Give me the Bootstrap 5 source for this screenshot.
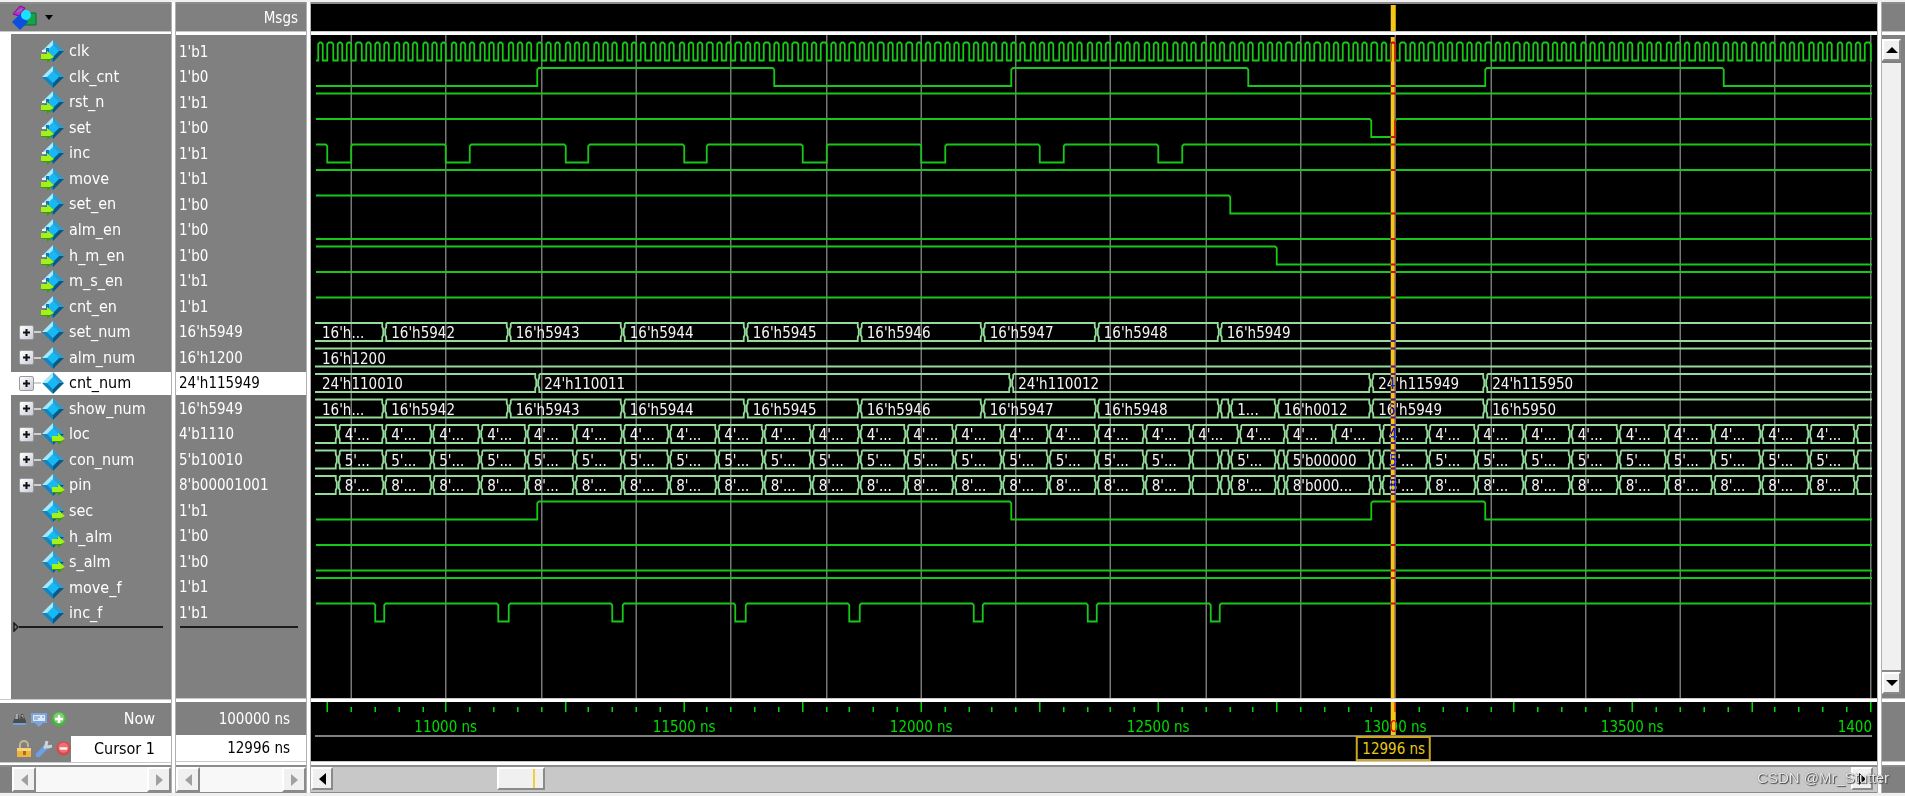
<!DOCTYPE html>
<html lang="en">
<head>
<meta charset="utf-8">
<meta name="viewport" content="width=device-width, initial-scale=1">
<title>Wave</title>
<link rel="stylesheet" href="https://cdn.jsdelivr.net/npm/bootstrap@5.3.0/dist/css/bootstrap.min.css">
<style>
  body { font-family: "DejaVu Sans Condensed", "DejaVu Sans", sans-serif; font-size: 15px; line-height: 20px; background: #f0f0f0; color: #fff; }
  .wave-window { height: 100vh; min-height: 560px; padding: 2px 0 3px; }
  .names-col { width: 171px; font-size: 16px; }
  .values-col { width: 130px; }
  .vbar-col { width: 23px; }
  .v-sash { width: 5px; background: #fff; border: solid #b0b0b0; border-width: 0 1px; }
  .h-sash { height: 4px; background: #fff; border: solid #c8c8c8; border-width: 1px 0 0; }
  .pane-grey { background: #808080; }
  .pane-black { background: #000; }
  .head-cell { height: 29px; border-top: 2px solid #8c8c8c; }
  .foot-cell { height: 59px; }
  .bar-cell { height: 28px; border-top: 2px solid #8c8c8c; border-bottom: 1px solid #8c8c8c; }
  .body-cell { min-height: 0; overflow: hidden; }
  .gutter { width: 11px; background: #fff; }
  .signal-rows { display: grid; grid-template-rows: repeat(23, 51fr) 145fr; padding-top: 4px; }
  .signal-rows > li { min-height: 0; white-space: nowrap; }
  .name-row { padding-left: 8px; line-height: 18px; }
  .value-row { padding-left: 3px; line-height: 18px; }
  .picked { background: #fff; color: #000; margin: 1px 0; }
  .expander { width: 15px; height: 15px; padding: 0; border: 1px solid #9a9a9a; border-radius: 2px; background: linear-gradient(135deg, #fff, #c9cdd8); }
  .expander svg, .menu-btn svg, .tool-btn svg, .arrow-btn svg { display: block; }
  .no-expander { width: 22px; }
  .twig { width: 7px; height: 2px; background: #d0d0d0; }
  .insert-mark { height: 10px; margin-top: -4px; }
  .insert-line { height: 2px; background: #1c1c1c; }
  .menu-btn, .tool-btn { padding: 0; border: 0; background: transparent; }
  .cursor-row { height: 26px; }
  .now-row { height: 33px; }
  .cursor-tools { width: 71px; padding-left: 16px; }
  .white-cell { background: #fff; color: #000; }
  .arrow-btn { padding: 0; background: #f0f0f0; border: 2px solid; border-color: #fff #8a8a8a #8a8a8a #fff; display: flex; align-items: center; justify-content: center; }
  .side-arrow { width: 24px; color: #a0a0a0; }
  .wave-arrow { width: 22px; color: #000; }
  .up-arrow { height: 22px; color: #000; }
  .trough { background: #f8f8f8; }
  .wave-trough { background: #c8c8c8; padding: 0 4px 2px 0; }
  .wave-thumb { width: 48px; background: #f0f0f0; border: 2px solid; border-color: #fff #8a8a8a #8a8a8a #fff; }
  .thumb-mark { width: 2px; background: #f0cf3a; margin-right: 8px; }
  .v-track { background: #f0f0f0; border-bottom: 2px solid #8a8a8a; margin-top: 2px; }
  .watermark { position: absolute; right: 16px; bottom: 8px; font: 15px/20px "Liberation Sans", sans-serif; color: #e8e8e8; text-shadow: 1px 1px 1px #444, 0 0 1px #666; pointer-events: none; }
  .plot { display: block; width: 100%; height: 100%; }
  .plot path { fill: none; }
  .scalar { stroke: #18c818; stroke-width: 1.8; }
  .bus { stroke: #93dc99; stroke-width: 1.8; }
  .grid-line { stroke: #777; stroke-width: 1.5; }
  .tick { stroke: #00dc00; stroke-width: 1.5; }
  .base-line { stroke: #808080; stroke-width: 2; }
  .bus-text { fill: #f4f4f4; }
  .time-text { fill: #00dc00; text-anchor: middle; }
  .time-text.clipped { text-anchor: end; }
  .cursor-line { fill: #f5c913; mix-blend-mode: difference; }
  .cursor-box { fill: #000; stroke: #c9a820; stroke-width: 2; }
  .cursor-text { fill: #e8c81c; text-anchor: middle; }
</style>
</head>
<body>
<svg width="0" height="0" class="position-absolute" aria-hidden="true">
  <defs>
    <symbol id="gem" viewBox="0 0 24 24">
      <path d="M12 1 1 12h5.500L12 6.500z" fill="#a5e9fb"/>
      <path d="M12 1 23 12h-5.500L12 6.500z" fill="#2c9dd2"/>
      <path d="M23 12 12 23v-5.500L17.500 12z" fill="#075a86"/>
      <path d="M1 12 12 23v-5.500L6.500 12z" fill="#0f86c0"/>
      <path d="M12 6 18 12 12 18 6 12z" fill="#16b9f4"/>
    </symbol>
    <symbol id="arrow" viewBox="0 0 13 12">
      <path d="M0 3h6V0l7 6-7 6V9H0z" fill="#3f9a0a"/>
      <path d="M0 3h6V0l7 6-4 2H0z" fill="#a4f01a"/>
    </symbol>
    <symbol id="sig-node" viewBox="0 0 24 24"><use href="#gem" width="24" height="24"/></symbol>
    <symbol id="sig-in" viewBox="0 0 24 24">
      <use href="#gem" width="24" height="24"/>
      <path d="M0 11h6v3H0z" fill="#808080"/>
      <path d="M1 11h5v2H1z" fill="#e8f6ff"/><path d="M5 9h3v4H5z" fill="#1477b4"/>
      <use href="#arrow" x="0" y="12" width="13" height="12"/>
    </symbol>
    <symbol id="sig-out" viewBox="0 0 24 24">
      <use href="#gem" width="24" height="24"/>
      <use href="#arrow" x="11" y="11" width="13" height="12"/>
    </symbol>
  </defs>
</svg>

<main class="wave-window d-flex position-relative overflow-hidden">
  <section class="names-col d-flex flex-column flex-shrink-0" aria-label="Signal names">
    <div class="head-cell pane-grey d-flex align-items-center ps-2">
      <button type="button" class="menu-btn d-flex align-items-center gap-2 ps-1" aria-label="Objects menu">
        <svg width="25" height="25" viewBox="0 0 25 25">
          <path d="M1 9 8 1l5 2-6 8z" fill="#c026d3" stroke="#7a0d92"/>
          <path d="M5 7l5-3" stroke="#808080" stroke-width="2"/>
          <path d="M13 8h11v12H12z" fill="#16a34a" stroke="#0b6b34"/>
          <path d="M8 9l8 8-8 8-8-8z" fill="#0b4fe0"/>
          <circle cx="14" cy="10" r="5" fill="#1fe0fb"/>
        </svg>
        <svg width="8" height="5" viewBox="0 0 8 5"><path d="M0 0h8L4 5z" fill="#000"/></svg>
      </button>
    </div>
    <div class="h-sash"></div>
    <div class="body-cell flex-fill d-flex">
      <div class="gutter"></div>
      <ul id="names" class="signal-rows pane-grey list-unstyled mb-0 flex-fill"></ul>
    </div>
    <div class="h-sash"></div>
    <div class="foot-cell pane-grey">
      <div class="now-row d-flex align-items-center justify-content-between ps-2">
        <div class="d-flex gap-1 ps-1">
          <button type="button" class="tool-btn" aria-label="Find"><svg width="15" height="16" viewBox="0 0 15 16"><path d="M1 11 4 3h2l2 6 1-6h2l3 7v2H1z" fill="#4c4c4c"/><path d="M4 3h2v5H3zM9 4h2l1 4z" fill="#a9a9a9"/><path d="M1 13h13" stroke="#6fa0d8" stroke-width="2"/></svg></button>
          <button type="button" class="tool-btn" aria-label="Edit grid"><svg width="16" height="16" viewBox="0 0 16 16"><path d="M0 2h16v10h-4l-4 4-4-4H0z" fill="#7aa5dc"/><path d="M2 4h12v6H2z" fill="#dce9f8"/><path d="M3 6h6M3 8h4M11 6h2" stroke="#6d8eb8"/></svg></button>
          <button type="button" class="tool-btn" aria-label="Add cursor"><svg width="16" height="16" viewBox="0 0 16 16"><circle cx="8" cy="8" r="7.500" fill="#4fae48"/><circle cx="8" cy="7" r="5.500" fill="#7ccf70"/><path d="M8 4v8M4 8h8" stroke="#fff" stroke-width="2.500"/></svg></button>
        </div>
        <span class="pe-3">Now</span>
      </div>
      <div class="cursor-row d-flex">
        <div class="cursor-tools d-flex align-items-center gap-1">
          <button type="button" class="tool-btn" aria-label="Lock cursor"><svg width="16" height="18" viewBox="0 0 16 18"><path d="M4 9V5a4 4 0 0 1 8 0v2" stroke="#c3b891" stroke-width="2" fill="none"/><path d="M1 8h14v9H1z" fill="#f0b43c"/><path d="M1 8h14v3H1z" fill="#f9d27a"/><path d="M7 11h3v4H7z" fill="#a86f12"/></svg></button>
          <button type="button" class="tool-btn" aria-label="Cursor properties"><svg width="16" height="17" viewBox="0 0 16 17"><path d="M2 15 9 8" stroke="#6f9fe6" stroke-width="5" stroke-linecap="round"/><path d="M8 8 12 5M11 1 10 5l2 2 4-1" stroke="#c9d3df" stroke-width="3" fill="none"/></svg></button>
          <button type="button" class="tool-btn" aria-label="Delete cursor"><svg width="15" height="15" viewBox="0 0 16 16"><circle cx="8" cy="8" r="7.500" fill="#d94848"/><circle cx="8" cy="7" r="5.500" fill="#f07070"/><path d="M4 8h8" stroke="#fff" stroke-width="2.500"/></svg></button>
        </div>
        <div class="white-cell flex-fill d-flex align-items-center justify-content-end pe-3">Cursor 1</div>
      </div>
    </div>
    <div class="h-sash"></div>
    <div class="bar-cell pane-grey d-flex">
      <div class="pane-grey ps-2 pe-1"></div>
      <button type="button" class="arrow-btn side-arrow" aria-label="Scroll names left"><svg width="7" height="12" viewBox="0 0 7 12"><path d="M7 0v12L0 6z" fill="currentColor"/></svg></button>
      <div class="trough flex-fill"></div>
      <button type="button" class="arrow-btn side-arrow" aria-label="Scroll names right"><svg width="7" height="12" viewBox="0 0 7 12"><path d="M0 0v12l7-6z" fill="currentColor"/></svg></button>
    </div>
  </section>
  <div class="v-sash flex-shrink-0"></div>

  <section class="values-col d-flex flex-column flex-shrink-0" aria-label="Signal values">
    <div class="head-cell pane-grey d-flex align-items-center justify-content-end pe-2">Msgs</div>
    <div class="h-sash"></div>
    <div class="body-cell flex-fill d-flex">
      <ul id="values" class="signal-rows pane-grey list-unstyled mb-0 flex-fill"></ul>
    </div>
    <div class="h-sash"></div>
    <div class="foot-cell pane-grey">
      <div class="now-row d-flex align-items-center justify-content-end pe-3">100000 ns</div>
      <div class="cursor-row white-cell d-flex align-items-center justify-content-end pe-3">12996 ns</div>
    </div>
    <div class="h-sash"></div>
    <div class="bar-cell pane-grey d-flex">
      <button type="button" class="arrow-btn side-arrow" aria-label="Scroll values left"><svg width="7" height="12" viewBox="0 0 7 12"><path d="M7 0v12L0 6z" fill="currentColor"/></svg></button>
      <div class="trough flex-fill"></div>
      <button type="button" class="arrow-btn side-arrow" aria-label="Scroll values right"><svg width="7" height="12" viewBox="0 0 7 12"><path d="M0 0v12l7-6z" fill="currentColor"/></svg></button>
    </div>
  </section>
  <div class="v-sash flex-shrink-0"></div>

  <section class="d-flex flex-column flex-fill overflow-hidden" aria-label="Waveforms">
    <div class="head-cell pane-black"><svg id="headPlot" class="plot"></svg></div>
    <div class="h-sash"></div>
    <div class="body-cell pane-black flex-fill position-relative"><svg id="wavePlot" class="plot position-absolute"></svg></div>
    <div class="h-sash"></div>
    <div class="foot-cell pane-black"><svg id="timePlot" class="plot"></svg></div>
    <div class="h-sash"></div>
    <div class="bar-cell wave-trough d-flex">
      <button type="button" class="arrow-btn wave-arrow" aria-label="Scroll waves left"><svg width="7" height="12" viewBox="0 0 7 12"><path d="M7 0v12L0 6z" fill="currentColor"/></svg></button>
      <div class="flex-fill d-flex">
        <div style="width: 10.800%"></div>
        <div class="wave-thumb d-flex justify-content-end"><div class="thumb-mark"></div></div>
      </div>
      <button type="button" class="arrow-btn wave-arrow" aria-label="Scroll waves right"><svg width="7" height="12" viewBox="0 0 7 12"><path d="M0 0v12l7-6z" fill="currentColor"/></svg></button>
    </div>
  </section>
  <div class="v-sash flex-shrink-0"></div>

  <aside class="vbar-col d-flex flex-column flex-shrink-0" aria-label="Vertical scroll">
    <div class="head-cell pane-grey"></div>
    <div class="h-sash"></div>
    <div class="body-cell flex-fill d-flex flex-column pane-grey pe-1 pt-1 pb-1">
      <button type="button" class="arrow-btn up-arrow" aria-label="Scroll up"><svg width="12" height="6" viewBox="0 0 12 6"><path d="M0 6h12L6 0z" fill="currentColor"/></svg></button>
      <div class="v-track flex-fill"></div>
      <button type="button" class="arrow-btn up-arrow" aria-label="Scroll down"><svg width="12" height="6" viewBox="0 0 12 6"><path d="M0 0h12L6 6z" fill="currentColor"/></svg></button>
    </div>
    <div class="h-sash"></div>
    <div class="foot-cell pane-grey"></div>
    <div class="h-sash"></div>
    <div class="bar-cell pane-grey"></div>
  </aside>
  <div class="watermark">CSDN @Mr_Stutter</div>
</main>

<script src="https://cdn.jsdelivr.net/npm/bootstrap@5.3.0/dist/js/bootstrap.bundle.min.js"></script>
<script>
// Visible time range in ns, position of the cursor, drawing step in px
const T0 = 10725.14, T1 = 14003.7, CURSOR = 12996, STEP = 1.5, EDGE = 5;

const range = (from, to, by) => { const out = []; for (let t = from; t <= to; t += by) out.push(t); return out; };
const pulses = (starts, len) => starts.flatMap(t => [t, t + len]);
const setEdges = [[0, "16'h..."], [10870, "16'h5942"], [11130, "16'h5943"], [11370, "16'h5944"], [11630, "16'h5945"],
  [11870, "16'h5946"], [12130, "16'h5947"], [12370, "16'h5948"]];
const fast = label => [[0, ""], ...range(10770, 13870, 100).map(t => [t, label]), [13970, ""]];
const fastWithGap = (label, wide) => [[0, ""], ...range(10770, 12470, 100).map(t => [t, label]), [12570, ""], [12630, ""],
  [12650, label], [12750, ""], [12770, wide], [12950, ""], ...range(12970, 13870, 100).map(t => [t, label]), [13970, ""]];

// level: value at the left edge; edges: times at which a one-bit signal toggles; bus: [time, label] pairs
const signals = [
  { name: "clk", value: "1'b1", kind: "in", level: 0, edges: range(10730, 14000, 10) },
  { name: "clk_cnt", value: "1'b0", kind: "node", level: 0, edges: [11190, 11690, 12190, 12690, 13190, 13690] },
  { name: "rst_n", value: "1'b1", kind: "in", level: 1, edges: [] },
  { name: "set", value: "1'b0", kind: "in", level: 1, edges: [12950, 13000] },
  { name: "inc", value: "1'b1", kind: "in", level: 1, edges: pulses(range(10750, 12500, 250), 50) },
  { name: "move", value: "1'b1", kind: "in", level: 1, edges: [] },
  { name: "set_en", value: "1'b0", kind: "in", level: 1, edges: [12650] },
  { name: "alm_en", value: "1'b0", kind: "in", level: 0, edges: [] },
  { name: "h_m_en", value: "1'b0", kind: "in", level: 1, edges: [12750] },
  { name: "m_s_en", value: "1'b1", kind: "in", level: 1, edges: [] },
  { name: "cnt_en", value: "1'b1", kind: "in", level: 1, edges: [] },
  { name: "set_num", value: "16'h5949", kind: "node", bus: [...setEdges, [12630, "16'h5949"]] },
  { name: "alm_num", value: "16'h1200", kind: "node", bus: [[0, "16'h1200"]] },
  { name: "cnt_num", value: "24'h115949", kind: "node", picked: true, bus: [[0, "24'h110010"], [11190, "24'h110011"], [12190, "24'h110012"], [12950, "24'h115949"], [13190, "24'h115950"]] },
  { name: "show_num", value: "16'h5949", kind: "node", bus: [...setEdges, [12630, ""], [12650, "1..."], [12750, "16'h0012"], [12950, "16'h5949"], [13190, "16'h5950"]] },
  { name: "loc", value: "4'b1110", kind: "out", bus: fast("4'...") },
  { name: "con_num", value: "5'b10010", kind: "node", bus: fastWithGap("5'...", "5'b00000") },
  { name: "pin", value: "8'b00001001", kind: "out", bus: fastWithGap("8'...", "8'b000...") },
  { name: "sec", value: "1'b1", kind: "out", level: 0, edges: [11190, 12190, 12950, 13190] },
  { name: "h_alm", value: "1'b0", kind: "out", level: 0, edges: [] },
  { name: "s_alm", value: "1'b0", kind: "out", level: 0, edges: [] },
  { name: "move_f", value: "1'b1", kind: "node", level: 1, edges: [] },
  { name: "inc_f", value: "1'b1", kind: "node", level: 1, edges: pulses([10850, 11110, 11350, 11610, 11850, 12110, 12350, 12610], 20) }
];

const plus = '<svg width="13" height="13" viewBox="0 0 13 13"><path d="M3 6.500h7M6.500 3v7" stroke="#111" stroke-width="2"/></svg>';
document.getElementById("names").innerHTML = signals.map(s => `
  <li class="name-row d-flex align-items-center ${s.picked ? "picked" : ""}">
    ${s.bus ? `<button type="button" class="expander" aria-label="Expand ${s.name}">${plus}</button><span class="twig"></span>` : '<span class="no-expander"></span>'}
    <svg width="24" height="24" class="flex-shrink-0 me-1" aria-hidden="true"><use href="#sig-${s.kind}"/></svg>
    <span>${s.name}</span>
  </li>`).join("") +
  `<li class="insert-mark d-flex align-items-center"><svg width="8" height="10" viewBox="0 0 8 10" class="flex-shrink-0"><path d="M3 1v8l4-4z" fill="none" stroke="#1c1c1c" stroke-width="1.500"/></svg><div class="insert-line flex-fill me-2"></div></li>`;
document.getElementById("values").innerHTML = signals.map(s =>
  `<li class="value-row d-flex align-items-center ${s.picked ? "picked" : ""}"><span>${s.value}</span></li>`).join("") +
  '<li class="insert-mark d-flex align-items-center"><div class="insert-line flex-fill ms-1 me-2"></div></li>';

function draw() {
  const plot = document.getElementById("wavePlot");
  const W = plot.clientWidth, H = plot.clientHeight;
  const x = t => EDGE + STEP / 2 + STEP * Math.floor((t - T0) / (T1 - T0) * (W - 2 * EDGE) / STEP);
  const right = W - EDGE;
  const rowH = (H - 4) * 51 / 1318;
  let out = "";

  range(10800, 14000, 200).forEach(t => { out += `<path class="grid-line" d="M${x(t)} 0V${H}"/>`; });

  signals.forEach((s, i) => {
    const hi = 4 + i * rowH + 3.5, lo = hi + 18;
    if (s.bus) {
      let d = "", labels = "";
      s.bus.forEach(([t, label], k) => {
        const first = k === 0, last = k === s.bus.length - 1;
        const a = first ? EDGE - 1 : x(t), b = last ? right : x(s.bus[k + 1][0]);
        const l = first ? a : a + 2, r = last ? b : b - 2;
        d += `M${l} ${hi}H${r}`;
        if (!last) d += `V${hi + 4}L${b - 1} ${hi + 6}V${lo - 6}L${r} ${lo - 4}V${lo}`;
        else d += `M${r} ${lo}`;
        d += `H${l}`;
        if (!first) d += `V${lo - 4}L${a + 1} ${lo - 6}V${hi + 6}L${l} ${hi + 4}V${hi}`;
        if (label) labels += `<text class="bus-text" x="${a + 7}" y="${hi + 15}">${label}</text>`;
      });
      out += `<path class="bus" d="${d}"/>${labels}`;
    } else {
      let level = s.level, d = `M${EDGE} ${level ? hi : lo}`;
      s.edges.forEach(t => {
        const px = x(t);
        d += level ? `H${px - 1.5}L${px} ${hi + 1.5}V${lo}` : `H${px}V${hi + 1.5}L${px + 1.5} ${hi}`;
        level = 1 - level;
      });
      out += `<path class="scalar" d="${d}H${right}"/>`;
    }
  });
  const cx = x(CURSOR);
  plot.innerHTML = out + `<rect class="cursor-line" x="${cx - 3}" y="2" width="5" height="${H}"/>`;
  document.getElementById("headPlot").innerHTML = `<rect class="cursor-line" x="${cx - 3}" y="1" width="5" height="40"/>`;

  let time = "";
  range(10750, 14000, 50).forEach(t => {
    time += `<path class="tick" d="M${x(t)} ${t % 250 ? 5 : 0}V10"/>`;
    if (t % 500 === 0) time += t < 14000
      ? `<text class="time-text" x="${x(t)}" y="30">${t} ns</text>`
      : `<text class="time-text clipped" x="${right}" y="30">1400</text>`;
  });
  time += `<path class="base-line" d="M${EDGE - 1} 34H${right}"/>
    <rect class="cursor-line" x="${cx - 3}" y="0" width="5" height="33"/>
    <rect class="cursor-box" x="${cx - 37}" y="35" width="73" height="23"/>
    <text class="cursor-text" x="${cx}" y="52">${CURSOR} ns</text>`;
  document.getElementById("timePlot").innerHTML = time;
}
draw();
window.addEventListener("resize", draw);
</script>
</body>
</html>
